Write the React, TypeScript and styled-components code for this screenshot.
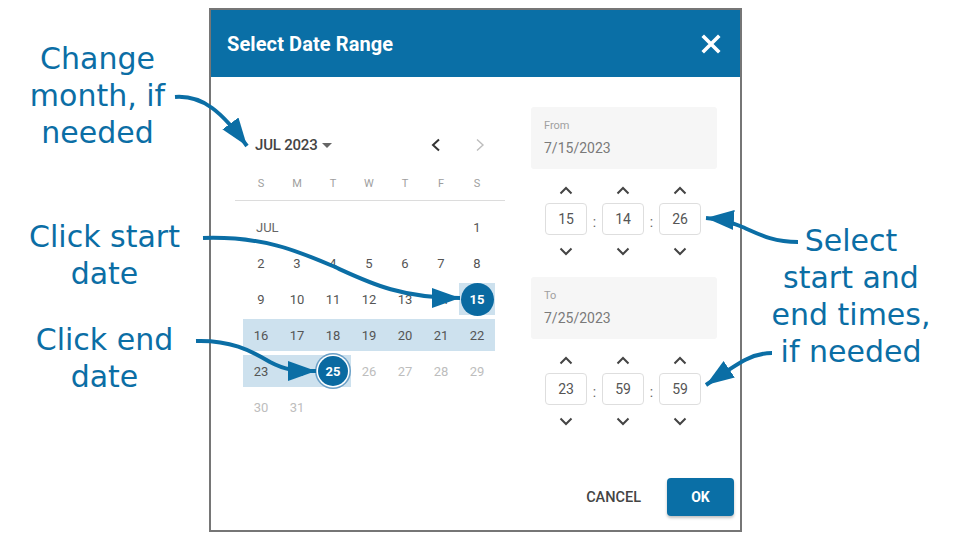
import styled, { createGlobalStyle, css } from "styled-components";

const blue = "#0b6ea5";

const GlobalStyle = createGlobalStyle`
  html, body {
    margin: 0;
    padding: 0;
    background: #ffffff;
  }
  * {
    box-sizing: border-box;
  }
`;

const Page = styled.div`
  position: relative;
  width: 960px;
  height: 540px;
  display: flex;
  background: #fff;
  overflow: hidden;
  font-family: Roboto, "Liberation Sans", sans-serif;
`;

const NotesColumn = styled.div<{ $width: number; $top: number }>`
  width: ${(p) => p.$width}px;
  flex: none;
  display: flex;
  flex-direction: column;
  align-items: center;
  padding-top: ${(p) => p.$top}px;
`;

const Note = styled.div<{ $shift?: number; $gap?: number }>`
  font-family: "DejaVu Sans", "Open Sans", sans-serif;
  font-size: 30px;
  line-height: 37px;
  color: ${blue};
  text-align: center;
  white-space: nowrap;
  margin-top: ${(p) => p.$gap ?? 0}px;
  transform: translateX(${(p) => p.$shift ?? 0}px);
`;

const Dialog = styled.div`
  width: 533px;
  height: 524px;
  margin-top: 8px;
  flex: none;
  border: 2px solid #767676;
  background: #fff;
  display: flex;
  flex-direction: column;
`;

const Header = styled.div`
  height: 67px;
  background: #0a6fa6;
  display: flex;
  align-items: center;
  justify-content: space-between;
  padding: 0 18px 0 16px;
`;

const Title = styled.h2`
  margin: 0;
  color: #fff;
  font-size: 20px;
  font-weight: 700;
  letter-spacing: 0.1px;
`;

const CloseButton = styled.div`
  width: 22px;
  height: 22px;
  display: flex;
  svg {
    width: 22px;
    height: 22px;
  }
`;

const Content = styled.div`
  flex: 1;
  display: flex;
  gap: 26px;
  padding-left: 24px;
`;

const Calendar = styled.div`
  width: 270px;
  padding-top: 50px;
`;

const MonthRow = styled.div`
  height: 36px;
  display: flex;
  align-items: center;
  padding-left: 20px;
`;

const MonthLabel = styled.div`
  font-size: 15px;
  font-weight: 500;
  color: #444;
  display: flex;
  align-items: center;
  gap: 5px;
  letter-spacing: -0.2px;
`;

const Caret = styled.span`
  width: 0;
  height: 0;
  border-left: 5px solid transparent;
  border-right: 5px solid transparent;
  border-top: 5px solid #666;
`;

const NavGroup = styled.div`
  margin-left: auto;
  display: flex;
  gap: 20px;
  padding-right: 13px;
`;

const NavButton = styled.div<{ $disabled?: boolean }>`
  width: 24px;
  height: 24px;
  display: flex;
  align-items: center;
  justify-content: center;
  color: ${(p) => (p.$disabled ? "#bdbdbd" : "#333")};
  svg {
    width: 12px;
    height: 14px;
  }
`;

const WeekRow = styled.div`
  height: 34px;
  margin-top: 4px;
  display: grid;
  grid-template-columns: repeat(7, 36px);
  padding: 0 8px;
  border-bottom: 1px solid #dcdcdc;
  align-items: center;
`;

const WeekDay = styled.span`
  text-align: center;
  font-size: 11px;
  color: #9e9e9e;
`;

const DayGrid = styled.div`
  margin-top: 8px;
  display: grid;
  grid-template-columns: repeat(7, 36px);
  grid-auto-rows: 36px;
  padding: 0 8px;
`;

const MonthTag = styled.div`
  grid-column: span 6;
  display: flex;
  align-items: center;
  padding-left: 13px;
  font-size: 13px;
  color: #666;
`;

const DayCell = styled.div<{ $inRange?: boolean; $muted?: boolean }>`
  position: relative;
  display: flex;
  align-items: center;
  justify-content: center;
  font-size: 13px;
  color: ${(p) => (p.$muted ? "#bdbdbd" : "#555")};
  ${(p) =>
    p.$inRange &&
    css`
      &::before {
        content: "";
        position: absolute;
        left: 0;
        right: 0;
        top: 2px;
        bottom: 2px;
        background: #cde1ee;
      }
    `}
  span {
    position: relative;
  }
`;

const SelectedDay = styled.span<{ $ring?: boolean }>`
  width: ${(p) => (p.$ring ? 30 : 33)}px;
  height: ${(p) => (p.$ring ? 30 : 33)}px;
  border-radius: 50%;
  background: #0a6aa1;
  color: #fff;
  font-weight: 700;
  display: flex;
  align-items: center;
  justify-content: center;
  ${(p) =>
    p.$ring &&
    css`
      box-shadow: 0 0 0 1.5px #ffffff, 0 0 0 3px #6a9fc6;
    `}
`;

const TimeColumn = styled.div`
  width: 186px;
  padding-top: 30px;
`;

const DateField = styled.div`
  height: 62px;
  background: #f6f6f6;
  border-radius: 3px;
  padding: 11px 13px;
`;

const FieldLabel = styled.div`
  font-size: 11px;
  line-height: 16px;
  color: #a0a0a0;
`;

const FieldValue = styled.div`
  margin-top: 4px;
  font-size: 14px;
  line-height: 20px;
  color: #7a7a7a;
`;

const TimeRow = styled.div`
  display: flex;
  align-items: center;
  padding-left: 14px;
  margin: 8px 0 10px;
`;

const Spinner = styled.div`
  width: 42px;
  display: flex;
  flex-direction: column;
  align-items: center;
`;

const SpinButton = styled.div<{ $down?: boolean }>`
  height: ${(p) => (p.$down ? 32 : 26)}px;
  display: flex;
  align-items: center;
  justify-content: center;
  color: #444;
  svg {
    width: 14px;
    height: 9px;
  }
`;

const TimeBox = styled.div`
  width: 42px;
  height: 32px;
  border: 1px solid #dedede;
  border-radius: 4px;
  display: flex;
  align-items: center;
  justify-content: center;
  font-size: 14px;
  color: #555;
`;

const Colon = styled.span`
  width: 15px;
  text-align: center;
  font-size: 14px;
  color: #666;
`;

const Footer = styled.div`
  display: flex;
  justify-content: flex-end;
  align-items: center;
  gap: 12px;
  padding: 0 6px 14px 0;
`;

const ActionButton = styled.div<{ $primary?: boolean }>`
  height: 38px;
  min-width: 67px;
  padding: 0 14px;
  display: flex;
  align-items: center;
  justify-content: center;
  font-size: ${(p) => (p.$primary ? 14 : 14.5)}px;
  font-weight: ${(p) => (p.$primary ? 700 : 500)};
  color: ${(p) => (p.$primary ? "#fff" : "#444")};
  background: ${(p) => (p.$primary ? "#0a6fa6" : "transparent")};
  border-radius: 4px;
  box-shadow: ${(p) => (p.$primary ? "0 2px 3px rgba(0,0,0,0.25)" : "none")};
`;

const ArrowLayer = styled.svg`
  position: absolute;
  left: 0;
  top: 0;
  width: 960px;
  height: 540px;
  pointer-events: none;
`;

const Chevron = ({ dir }: { dir: "up" | "down" | "left" | "right" }) => {
  const d = {
    up: "M1.5 7.5 L7 2 L12.5 7.5",
    down: "M1.5 1.5 L7 7 L12.5 1.5",
    left: "M9 1.5 L3 7 L9 12.5",
    right: "M3 1.5 L9 7 L3 12.5",
  }[dir];
  const vb = dir === "up" || dir === "down" ? "0 0 14 9" : "0 0 12 14";
  return (
    <svg viewBox={vb} fill="none" stroke="currentColor" strokeWidth={dir === "right" ? 1.4 : 2}>
      <path d={d} />
    </svg>
  );
};

const weekDays = ["S", "M", "T", "W", "T", "F", "S"];

function Day({ n }: { n: number }) {
  const inRange = n >= 15 && n <= 25;
  const muted = n > 25;
  return (
    <DayCell $inRange={inRange} $muted={muted}>
      {n === 15 ? (
        <SelectedDay>15</SelectedDay>
      ) : n === 25 ? (
        <SelectedDay $ring>25</SelectedDay>
      ) : (
        <span>{n}</span>
      )}
    </DayCell>
  );
}

function TimePicker({ label, date, time }: { label: string; date: string; time: string[] }) {
  return (
    <>
      <DateField>
        <FieldLabel>{label}</FieldLabel>
        <FieldValue>{date}</FieldValue>
      </DateField>
      <TimeRow>
        {time.map((t, i) => (
          <>
            {i > 0 && <Colon key={"c" + i}>:</Colon>}
            <Spinner key={"s" + i}>
              <SpinButton>
                <Chevron dir="up" />
              </SpinButton>
              <TimeBox>{t}</TimeBox>
              <SpinButton $down>
                <Chevron dir="down" />
              </SpinButton>
            </Spinner>
          </>
        ))}
      </TimeRow>
    </>
  );
}

export default function App() {
  const days = Array.from({ length: 31 }, (_, i) => i + 1);
  return (
    <>
      <GlobalStyle />
      <Page>
        <NotesColumn $width={209} $top={40}>
          <Note $shift={-7}>
            Change
            <br />
            month, if
            <br />
            needed
          </Note>
          <Note $gap={67}>
            Click start
            <br />
            date
          </Note>
          <Note $gap={29}>
            Click end
            <br />
            date
          </Note>
        </NotesColumn>

        <Dialog>
          <Header>
            <Title>Select Date Range</Title>
            <CloseButton>
              <svg viewBox="0 0 22 22" stroke="#fff" strokeWidth={3.6} strokeLinecap="square">
                <path d="M4 4 L18 18 M18 4 L4 18" />
              </svg>
            </CloseButton>
          </Header>
          <Content>
            <Calendar>
              <MonthRow>
                <MonthLabel>
                  JUL 2023 <Caret />
                </MonthLabel>
                <NavGroup>
                  <NavButton>
                    <Chevron dir="left" />
                  </NavButton>
                  <NavButton $disabled>
                    <Chevron dir="right" />
                  </NavButton>
                </NavGroup>
              </MonthRow>
              <WeekRow>
                {weekDays.map((d, i) => (
                  <WeekDay key={i}>{d}</WeekDay>
                ))}
              </WeekRow>
              <DayGrid>
                <MonthTag>JUL</MonthTag>
                {days.map((n) => (
                  <Day key={n} n={n} />
                ))}
              </DayGrid>
            </Calendar>
            <TimeColumn>
              <TimePicker label="From" date="7/15/2023" time={["15", "14", "26"]} />
              <TimePicker label="To" date="7/25/2023" time={["23", "59", "59"]} />
            </TimeColumn>
          </Content>
          <Footer>
            <ActionButton>CANCEL</ActionButton>
            <ActionButton $primary>OK</ActionButton>
          </Footer>
        </Dialog>

        <NotesColumn $width={218} $top={222}>
          <Note>
            Select
            <br />
            start and
            <br />
            end times,
            <br />
            if needed
          </Note>
        </NotesColumn>

        <ArrowLayer viewBox="0 0 960 540">
          <defs>
            <marker
              id="head"
              markerUnits="userSpaceOnUse"
              markerWidth="30"
              markerHeight="22"
              refX="28"
              refY="10"
              orient="auto"
            >
              <path d="M0 0 L28 10 L0 20 z" fill={blue} />
            </marker>
          </defs>
          <g fill="none" stroke={blue} strokeWidth={4} strokeLinecap="butt" markerEnd="url(#head)">
            <path d="M175 97 C 203 95, 222 112, 247 146" />
            <path d="M203 238 C 265 236, 300 252, 335 267 C 370 283, 400 298, 460 298" />
            <path d="M196 341 C 230 340, 250 350, 270 362 C 285 370, 295 371, 316 371" />
            <path d="M798 242 C 770 242, 755 232, 740 226 C 728 221, 720 219, 706 218" />
            <path d="M772 353 C 752 353, 740 362, 706 385" />
          </g>
        </ArrowLayer>
      </Page>
    </>
  );
}
